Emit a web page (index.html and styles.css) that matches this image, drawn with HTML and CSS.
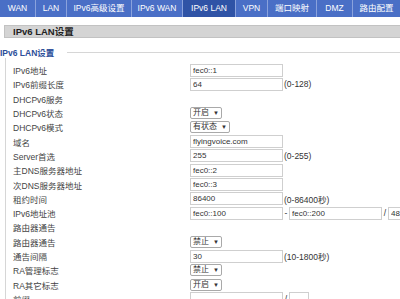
FILE: index.html
```html
<!DOCTYPE html>
<html lang="zh-CN">
<head>
    <meta charset="UTF-8">
    <meta name="viewport" content="width=device-width, initial-scale=1.0">
    <title>IPv6 LAN设置</title>
    <link rel="stylesheet" href="styles.css">
</head>
<body>

    <nav class="tabs">
        <a class="tab tab-wan">WAN</a>
        <a class="tab tab-lan">LAN</a>
        <a class="tab tab-adv">IPv6高级设置</a>
        <a class="tab tab-v6wan">IPv6 WAN</a>
        <a class="tab tab-v6lan active">IPv6 LAN</a>
        <a class="tab tab-vpn">VPN</a>
        <a class="tab tab-port">端口映射</a>
        <a class="tab tab-dmz">DMZ</a>
        <a class="tab tab-route">路由配置</a>
    </nav>

    <div class="page-title">IPv6 LAN设置</div>

    <div class="section">
        <div class="section-head">
            <span class="legend">IPv6 LAN设置</span>
            <span class="rule"></span>
        </div>
        <div class="section-body">
            <table class="form">
                <tr>
                    <td class="label">IPv6地址</td>
                    <td><input class="text" type="text" value="fec0::1"></td>
                </tr>
                <tr>
                    <td class="label">IPv6前缀长度</td>
                    <td><input class="text" type="text" value="64"><span class="hint">(0-128)</span></td>
                </tr>
                <tr>
                    <td class="label">DHCPv6服务</td>
                    <td></td>
                </tr>
                <tr>
                    <td class="label">DHCPv6状态</td>
                    <td><span class="select">开启<i>▼</i></span></td>
                </tr>
                <tr>
                    <td class="label">DHCPv6模式</td>
                    <td><span class="select">有状态<i>▼</i></span></td>
                </tr>
                <tr>
                    <td class="label">域名</td>
                    <td><input class="text" type="text" value="flyingvoice.com"></td>
                </tr>
                <tr>
                    <td class="label">Server首选</td>
                    <td><input class="text" type="text" value="255"><span class="hint">(0-255)</span></td>
                </tr>
                <tr>
                    <td class="label">主DNS服务器地址</td>
                    <td><input class="text" type="text" value="fec0::2"></td>
                </tr>
                <tr>
                    <td class="label">次DNS服务器地址</td>
                    <td><input class="text" type="text" value="fec0::3"></td>
                </tr>
                <tr>
                    <td class="label">租约时间</td>
                    <td><input class="text" type="text" value="86400"><span class="hint">(0-86400秒)</span></td>
                </tr>
                <tr>
                    <td class="label">IPv6地址池</td>
                    <td class="pool">
                        <input class="text" type="text" value="fec0::100"><span class="sep">-</span><input class="text" type="text" value="fec0::200"><span class="sep">/</span><input class="text short" type="text" value="48">
                    </td>
                </tr>
                <tr>
                    <td class="label">路由器通告</td>
                    <td></td>
                </tr>
                <tr>
                    <td class="label">路由器通告</td>
                    <td><span class="select">禁止<i>▼</i></span></td>
                </tr>
                <tr>
                    <td class="label">通告间隔</td>
                    <td><input class="text" type="text" value="30"><span class="hint">(10-1800秒)</span></td>
                </tr>
                <tr>
                    <td class="label">RA管理标志</td>
                    <td><span class="select">禁止<i>▼</i></span></td>
                </tr>
                <tr>
                    <td class="label">RA其它标志</td>
                    <td><span class="select">开启<i>▼</i></span></td>
                </tr>
                <tr>
                    <td class="label">前缀</td>
                    <td class="pool">
                        <input class="text" type="text" value=""><span class="sep">/</span><input class="text tiny" type="text" value="">
                    </td>
                </tr>
            </table>
        </div>
    </div>

</body>
</html>
```

FILE: styles.css
```css
body {
    margin: 0;
    font-family: "Liberation Sans", "Noto Sans CJK SC", sans-serif;
    font-size: 8.5px;
    color: #333;
    background: #fff;
    overflow: hidden;
}
.tabs {
    display: flex;
    height: 17px;
    background-color: #4a6fc6;
    white-space: nowrap;
}
.tab {
    flex: none;
    color: #fff;
    font-size: 8.5px;
    line-height: 17px;
    text-align: center;
    border-right: 1px solid #8aa2dc;
    box-sizing: border-box;
}
.tab.active {
    background-color: #2f53a6;
}
.tab-wan { width: 36px; }
.tab-lan { width: 31px; }
.tab-adv { width: 65px; }
.tab-v6wan { width: 51px; }
.tab-v6lan { width: 53px; }
.tab-vpn { width: 32px; }
.tab-port { width: 49px; }
.tab-dmz { width: 36px; }
.tab-route { width: 47px; border-right: none; }

.page-title {
    margin: 8px 0 0 4px;
    height: 11px;
    line-height: 11px;
    padding-left: 8px;
    background-color: #d4d4d4;
    border: 1px solid #c2c2c2;
    border-right: none;
    font-size: 9.5px;
    font-weight: bold;
    color: #222;
}

.section {
    margin-top: 8px;
}
.section-head {
    display: flex;
    align-items: center;
    height: 12px;
}
.legend {
    font-size: 8.5px;
    font-weight: bold;
    color: #2d4f9a;
    padding-right: 13px;
}
.rule {
    flex: 1;
    border-top: 1px solid #d6d6d6;
}
.section-body {
    margin-left: 5px;
    padding: 5px 0 0 7px;
    border-left: 1px solid #d6d6d6;
}

.form {
    border-collapse: collapse;
    table-layout: fixed;
    width: 420px;
}
.form td {
    padding: 0;
    height: 14.3px;
    white-space: nowrap;
    vertical-align: middle;
}
.form .label {
    width: 177px;
    color: #444;
}
.text {
    width: 93px;
    height: 13px;
    box-sizing: border-box;
    margin: 0;
    padding: 0 2px;
    border: 1px solid #cfcfcf;
    font-family: "Liberation Sans", "Noto Sans CJK SC", sans-serif;
    font-size: 8px;
    color: #333;
    vertical-align: middle;
}
.text.short {
    width: 20px;
}
.text.tiny {
    width: 20px;
}
.hint {
    margin-left: 1px;
    vertical-align: middle;
}
.sep {
    display: inline-block;
    width: 6px;
    text-align: center;
    vertical-align: middle;
}
.select {
    display: inline-block;
    height: 12px;
    line-height: 10px;
    box-sizing: border-box;
    padding: 0 2px 0 2px;
    border: 1px solid #a9a9a9;
    border-radius: 2px;
    background: #fff;
    font-size: 8px;
    vertical-align: middle;
}
.select i {
    font-style: normal;
    font-size: 6px;
    margin-left: 4px;
    vertical-align: top;
}
```
